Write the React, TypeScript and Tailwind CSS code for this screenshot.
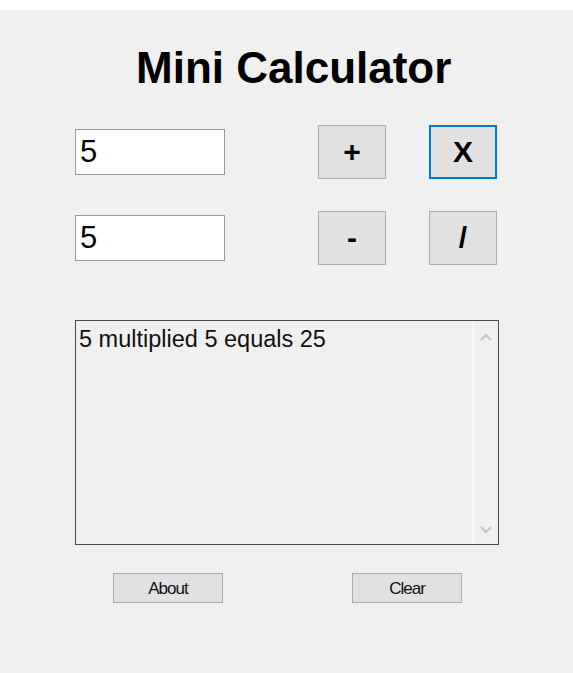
import { useState } from 'react';

const opBtn =
  'w-[68px] h-[54px] bg-[#e1e1e1] flex items-center justify-center text-[30px] font-bold text-black leading-none';

const smallBtn =
  'w-[110px] h-[30px] bg-[#e1e1e1] border border-[#adadad] text-[17px] tracking-[-1px] text-[#111] leading-none flex items-center justify-center';

const Chevron = ({ up }: { up?: boolean }) => (
  <svg width="12" height="8" viewBox="0 0 12 8">
    <polyline
      points={up ? '1,7 6,2 11,7' : '1,1 6,6 11,1'}
      fill="none"
      stroke="#c4c4c4"
      strokeWidth="2.2"
    />
  </svg>
);

const App = () => {
  const [a, setA] = useState('5');
  const [b, setB] = useState('5');
  const [result, setResult] = useState('5 multiplied 5 equals 25');

  const calc = (op: string) => {
    const x = parseFloat(a);
    const y = parseFloat(b);
    if (op === '+') setResult(`${a} plus ${b} equals ${x + y}`);
    if (op === '-') setResult(`${a} minus ${b} equals ${x - y}`);
    if (op === 'X') setResult(`${a} multiplied ${b} equals ${x * y}`);
    if (op === '/') setResult(`${a} divided ${b} equals ${x / y}`);
  };

  return (
    <div className="min-h-[673px] bg-white pt-[10px] font-['Liberation_Sans',Arial,sans-serif] text-black">
      <div className="h-[663px] bg-[#f0f0f0] pl-[75px] pt-[36px]">
        <h1 className="ml-[61px] text-[44px] font-bold leading-none">Mini Calculator</h1>

        <div className="mt-[35px] flex flex-col gap-[32px]">
          <div className="flex items-center">
            <input
              value={a}
              onChange={(e) => setA(e.target.value)}
              className="w-[150px] h-[46px] bg-white border border-[#9a9a9a] pl-[4px] text-[31px] leading-none outline-none"
            />
            <button onClick={() => calc('+')} className={`${opBtn} ml-[93px] border border-[#adadad]`}>
              +
            </button>
            <button onClick={() => calc('X')} className={`${opBtn} ml-[43px] border-2 border-[#0078d7]`}>
              X
            </button>
          </div>
          <div className="flex items-center">
            <input
              value={b}
              onChange={(e) => setB(e.target.value)}
              className="w-[150px] h-[46px] bg-white border border-[#9a9a9a] pl-[4px] text-[31px] leading-none outline-none"
            />
            <button onClick={() => calc('-')} className={`${opBtn} ml-[93px] border border-[#adadad]`}>
              -
            </button>
            <button onClick={() => calc('/')} className={`${opBtn} ml-[43px] border border-[#adadad]`}>
              /
            </button>
          </div>
        </div>

        <div className="mt-[55px] w-[424px] h-[225px] border-[1.5px] border-[#4a4a4a] flex">
          <div className="flex-1 pl-[3px] pt-[7px] text-[23.5px] leading-none text-[#111]">{result}</div>
          <div className="w-[25px] border-l border-white flex flex-col items-center justify-between pt-[12px] pb-[10px]">
            <Chevron up />
            <Chevron />
          </div>
        </div>

        <div className="mt-[28px] pl-[38px] flex gap-[129px]">
          <button className={smallBtn}>About</button>
          <button onClick={() => setResult('')} className={smallBtn}>
            Clear
          </button>
        </div>
      </div>
    </div>
  );
};

export default App;
